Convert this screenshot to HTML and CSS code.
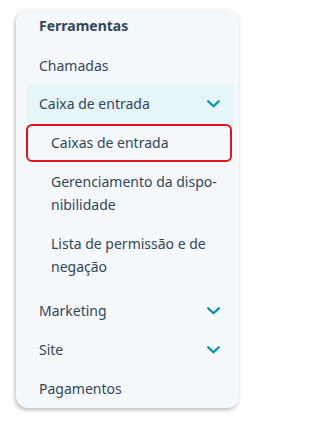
FILE: index.html
```html
<!DOCTYPE html>
<html lang="pt">
<head>
<meta charset="utf-8">
<link rel="stylesheet" href="styles.css">
</head>
<body>
<nav class="card">
  <div class="heading">Ferramentas</div>
  <ul class="menu">
    <li class="row">Chamadas</li>
    <li class="row expanded">
      <span>Caixa de entrada</span>
      <svg class="chev" width="13" height="8" viewBox="0 0 13 8"><path d="M1.2 1.2 L6.5 6.3 L11.8 1.2" fill="none" stroke="#0091ae" stroke-width="2.2" stroke-linecap="round" stroke-linejoin="round"/></svg>
    </li>
    <li>
      <ul class="sub">
        <li class="row subrow selected">Caixas de entrada</li>
        <li class="row subrow">Gerenciamento da dispo-<br>nibilidade</li>
        <li class="row subrow">Lista de permissão e de negação</li>
      </ul>
    </li>
    <li class="row">
      <span>Marketing</span>
      <svg class="chev" width="13" height="8" viewBox="0 0 13 8"><path d="M1.2 1.2 L6.5 6.3 L11.8 1.2" fill="none" stroke="#0091ae" stroke-width="2.2" stroke-linecap="round" stroke-linejoin="round"/></svg>
    </li>
    <li class="row">
      <span>Site</span>
      <svg class="chev" width="13" height="8" viewBox="0 0 13 8"><path d="M1.2 1.2 L6.5 6.3 L11.8 1.2" fill="none" stroke="#0091ae" stroke-width="2.2" stroke-linecap="round" stroke-linejoin="round"/></svg>
    </li>
    <li class="row">Pagamentos</li>
  </ul>
</nav>
</body>
</html>
```
FILE: styles.css
```css
* { box-sizing: border-box; }
html, body { margin: 0; padding: 0; background: #ffffff; }
body {
  width: 250px;
  height: 431px;
  padding: 10px 11px 0 16px;
  font-family: "Noto Sans", "DejaVu Sans", sans-serif;
  color: #33475b;
  font-size: 14px;
}
.card {
  width: 223px;
  height: 398px;
  background: #f5f8fa;
  border-radius: 12px;
  box-shadow: -1px 2px 4px rgba(0, 0, 0, 0.28);
  padding: 0 6px 0 11px;
}
.heading {
  font-weight: 700;
  line-height: 23px;
  padding: 4px 0 9px 12px;
}
.menu, .sub {
  list-style: none;
  margin: 0;
  padding: 0;
}
.row {
  display: flex;
  align-items: center;
  justify-content: space-between;
  line-height: 23px;
  padding: 8px 13px 8px 12px;
  min-height: 39px;
}
.expanded {
  background: #e5f5f8;
  min-height: 38px;
  padding-top: 7px;
  padding-bottom: 8px;
}
.sub { padding-top: 1px; padding-bottom: 5px; }
.subrow { padding-left: 24px; }
.selected {
  border: 2px solid #e3141b;
  border-radius: 6px;
  margin-left: -1px;
  margin-right: 1px;
  min-height: 38px;
  padding: 5px 13px 6px 23px;
}
.chev { display: block; flex: none; }
```
